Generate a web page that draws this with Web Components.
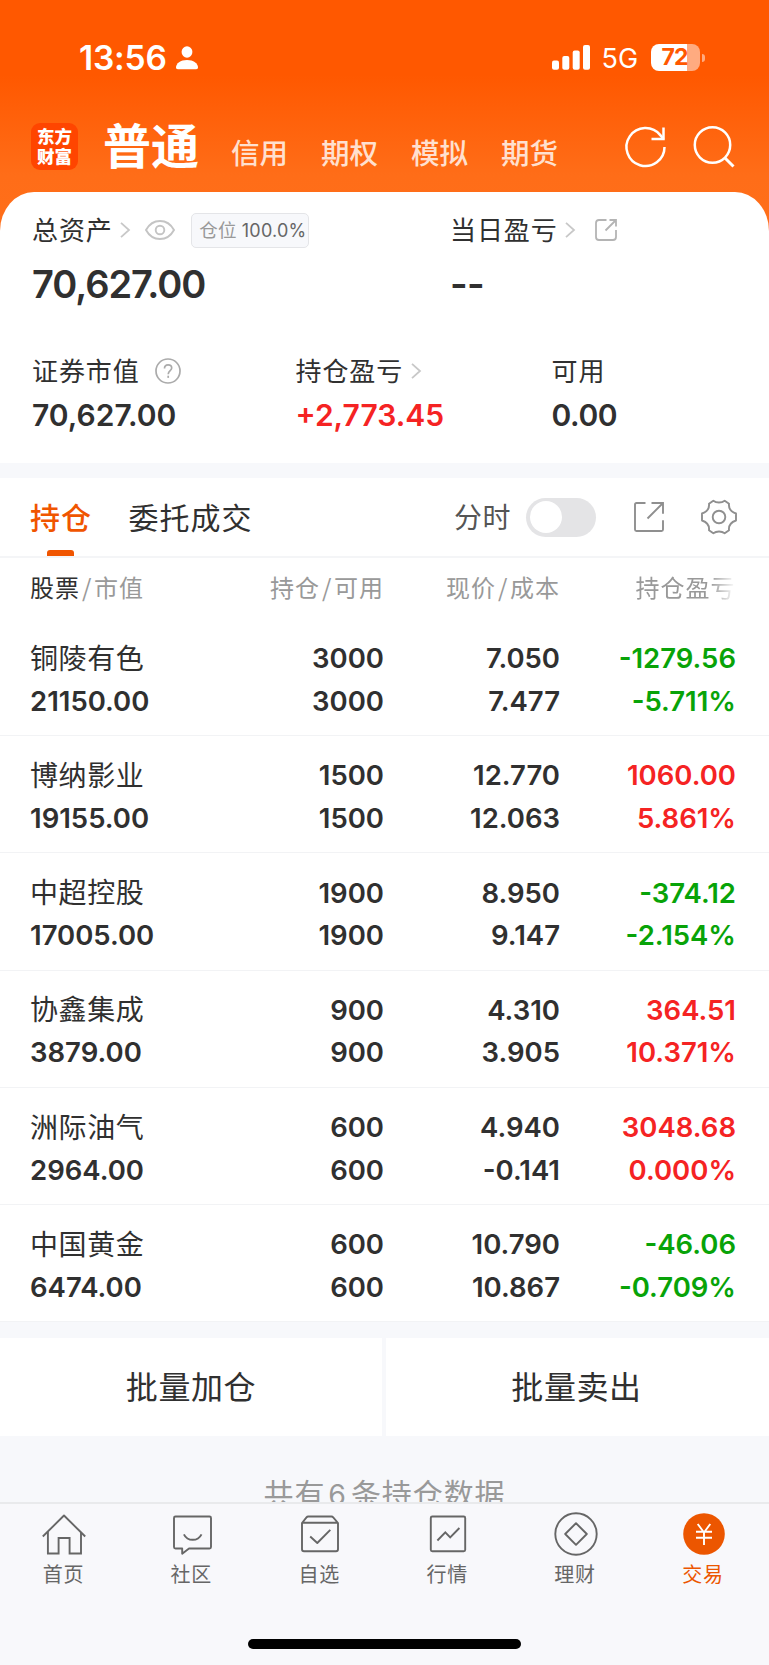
<!DOCTYPE html>
<html lang="zh-CN">
<head>
<meta charset="utf-8">
<title>交易</title>
<style>
html,body{margin:0;padding:0}
body{width:769px;height:1665px;overflow:hidden;background:#f7f8fb;color:#303030;font-family:"Noto Sans CJK SC","Liberation Sans",sans-serif}
</style>
</head>
<body>
<trade-app></trade-app>
<script>
const CJK = '"Noto Sans CJK SC","Liberation Sans",sans-serif';
const NUM = 'Inter,"Noto Sans CJK SC",sans-serif';
const define = (name, render) => customElements.define(name, class extends HTMLElement {
  connectedCallback() {
    if (this.shadowRoot) return;
    const t = document.createElement('template');
    t.innerHTML = '<style>*{box-sizing:border-box}svg{display:block;overflow:visible}</style>' + render(this);
    this.attachShadow({ mode: 'open' }).append(t.content.cloneNode(true));
  }
});

/* Line icons; each entry is [width, height, markup] */
const ICONS = {
  person: [23, 24, '<g fill="#fff"><ellipse cx="11" cy="6" rx="5.400" ry="5.800"/><path d="M0 21.500C0 17.500 4.500 14 11 14s11 3.500 11 7.500c0 1-.8 1.700-1.800 1.700H1.800C.8 23.200 0 22.500 0 21.500z"/></g>'],
  signal: [39, 25, '<g fill="#fff"><rect x="0" y="15.500" width="7" height="9.300" rx="2"/><rect x="10.300" y="11" width="7" height="13.800" rx="2"/><rect x="20.700" y="5.500" width="7" height="19.300" rx="2"/><rect x="31" y="0" width="7" height="24.800" rx="2"/></g>'],
  refresh: [42, 42, '<g fill="none" stroke="#fff" stroke-width="2.500"><path d="M39.500 21A19 19 0 1 1 35.300 9.100L38.500 13"/><path d="M38.500 1.500V13H26.500"/></g>'],
  search: [42, 42, '<g fill="none" stroke="#fff" stroke-width="2.500"><circle cx="19.500" cy="19" r="17.700"/><path d="M31.500 31.500L40.500 40.500" stroke-width="3"/></g>'],
  chevron: [10, 16, '<path d="M1 .8L9 8 1 15.200" fill="none" stroke="#c8c8c8" stroke-width="1.800"/>'],
  eye: [30, 20, '<g fill="none" stroke="#c4c4c4" stroke-width="1.900"><path d="M1 10C4 4.500 9.500 1 15 1s11 3.500 14 9c-3 5.500-8.500 9-14 9S4 15.500 1 10z"/><circle cx="15" cy="10" r="4.300"/></g>'],
  help: [26, 26, '<g fill="none" stroke="#ababab" stroke-width="1.700"><circle cx="13" cy="13" r="12"/><path d="M9.500 10.500C9.500 8 11 6.800 13.100 6.800s3.600 1.300 3.600 3.200c0 2.600-3.500 2.800-3.500 6.300"/><path d="M13.200 17.700v2.200"/></g>'],
  share: [22, 22, '<g fill="none" stroke="#b4b4b4" stroke-width="1.800"><path d="M11.500 1H4Q1 1 1 4V18Q1 21 4 21H18Q21 21 21 18V11"/><path d="M10.500 11.500L21 1M14.500 1H21V7.500"/></g>'],
  external: [30, 30, '<g fill="none" stroke="#8f8f8f" stroke-width="1.900"><path d="M11.500 1H2.500Q1 1 1 2.500V27.500Q1 29 2.500 29H27.500Q29 29 29 27.500V18.300"/><path d="M13.500 16.500L28.500 1.500M17.500 1H29V11.800"/></g>'],
  gear: [36, 36, '<g fill="none" stroke="#8f8f8f" stroke-width="1.900" stroke-linejoin="round"><path d="M12.300 1.700C14 3 16 3.500 18 3.500S22 3 23.700 1.700L28 4.700C27.500 9 29.800 12.700 35 14.500V21.500C29.800 23.300 27.500 27 28 31.300L23.700 34.300C22 33 20 32.500 18 32.500S14 33 12.300 34.300L8 31.300C8.500 27 6.200 23.300 1 21.500V14.500C6.200 12.700 8.500 9 8 4.700z"/><circle cx="18" cy="18" r="6.300"/></g>'],
  home: [44, 44, '<g fill="none" stroke="#666" stroke-width="1.900"><path d="M.8 24.500L22 3.500 43.200 24.500" stroke-linejoin="round"/><path d="M5.900 20V41.500H16.600V26H27.600V41.500H39V20"/></g>'],
  chat: [44, 44, '<g fill="none" stroke="#666" stroke-width="1.900" stroke-linejoin="round"><path d="M5.500 4.500H39.500Q41 4.500 41 6V35Q41 36.500 39.500 36.500H19L12.200 41.700V36.500H5.500Q4 36.500 4 35V6Q4 4.500 5.500 4.500z"/><path d="M13.900 22.300Q16.600 27.800 22.700 27.800T31.500 22.300"/></g>'],
  pick: [44, 44, '<g fill="none" stroke="#666" stroke-width="1.900" stroke-linejoin="round"><path d="M4 11L8.500 5.400Q9.200 4.500 10.200 4.500H33.500Q34.500 4.500 35.200 5.400L40 11V37.300Q40 39.300 38 39.300H6Q4 39.300 4 37.300zM4 10.800H40"/><path d="M12.200 24.500L19.300 31 32.300 17.800"/></g>'],
  chart: [44, 44, '<g fill="none" stroke="#666" stroke-width="1.900"><rect x="4.800" y="4.500" width="34.400" height="34.800" rx="1.500"/><path d="M11.400 28.500L19.300 20.300 24.200 25.300 33.400 16"/></g>'],
  wealth: [44, 44, '<g fill="none" stroke="#666" stroke-width="1.900" stroke-linejoin="round"><circle cx="22" cy="22" r="20.700"/><path d="M22 11.200L32.800 22 22 32.800 11.200 22z"/></g>'],
  trade: [44, 44, '<circle cx="22" cy="22" r="20.800" fill="#ec5600"/><path d="M15.700 12L22 20.500 28.300 12M14 19.700H30M14 25.800H30M22 20V33" fill="none" stroke="#fff" stroke-width="1.900"/>']
};
define('app-icon', el => {
  const [w, h, body] = ICONS[el.getAttribute('name')];
  return `<style>:host{display:block;flex:none;width:${w}px;height:${h}px}</style><svg width="${w}" height="${h}" viewBox="0 0 ${w} ${h}">${body}</svg>`;
});

define('status-bar', () => `<style>
:host{display:flex;align-items:center;height:86px;padding:29px 64.500px 0 79px;color:#fff;font-family:${NUM}}
.time{font-size:33.500px;font-weight:600;line-height:40px;width:97px;letter-spacing:-.2px}
.right{display:flex;align-items:center;margin-left:auto}
.net{font-size:27px;line-height:40px;margin-left:11px;width:37px;position:relative;top:1px}
.bat{width:49px;height:27px;border-radius:8px;background:linear-gradient(90deg,#fff 73%,#ffab80 73%);color:#ff5800;font-size:23px;font-weight:700;line-height:27px;text-align:center;margin-left:12px;letter-spacing:-1px;padding-right:1px}
.tip{width:3px;height:8px;margin-left:2px;border-radius:0 4px 4px 0;background:#ffab80}
</style><div class="time">13:56</div><app-icon name="person"></app-icon>
<div class="right"><app-icon name="signal"></app-icon><div class="net">5G</div><div class="bat">72</div><div class="tip"></div></div>`);

define('app-header', () => `<style>
:host{display:flex;align-items:flex-start;height:106px;padding:37px 34px 0 31px;color:#fff}
.logo{flex:none;width:47px;height:47px;border-radius:9px;background:#ff4500}
.logo span{display:block;height:20px;text-align:center;font:900 17.500px/20px ${CJK};position:relative;top:2.500px}
.main{font-size:48px;font-weight:700;line-height:60px;margin:-10px 0 0 25px;width:128px;white-space:nowrap}
.tab{font-size:28.500px;font-weight:500;line-height:40px;width:90px;margin-top:9px;color:#ffe0cf}
.icons{display:flex;gap:26px;margin:3px 0 0 auto}
</style><div class="logo"><span>东方</span><span>财富</span></div><div class="main">普通</div>
<div class="tab">信用</div><div class="tab">期权</div><div class="tab">模拟</div><div class="tab">期货</div>
<div class="icons"><app-icon name="refresh"></app-icon><app-icon name="search"></app-icon></div>`);

define('asset-stat', el => `<style>
:host{display:block}
.label{display:flex;align-items:center;height:36px;font-size:26px;letter-spacing:.9px;line-height:36px;white-space:nowrap}
.label b{font-weight:400;position:relative;top:-1px}
.value{font:600 ${el.hasAttribute('big') ? '38px/40px' : '30px/40px'} ${NUM};margin-top:${el.hasAttribute('big') ? 16 : 6}px;color:${el.getAttribute('color') || 'inherit'};white-space:nowrap;letter-spacing:${el.getAttribute('ls') || 0}px}
</style><div class="label"><b>${el.getAttribute('label')}</b><slot></slot></div><div class="value">${el.getAttribute('value')}</div>`);

define('asset-card', () => `<style>
:host{display:block;height:271px;background:#fff;border-radius:34px 34px 0 0/39px 39px 0 0;padding:20px 0 0 32px}
.top{display:grid;grid-template-columns:418px 1fr;height:141px}
.sub{display:grid;grid-template-columns:263.500px 256px 1fr}
.chev{margin-left:7.500px}.eye{margin-left:15px}.help{margin-left:15.500px}.share{margin-left:20px}
.badge{display:flex;align-items:center;width:118px;height:35px;margin-left:16px;padding-left:7px;border:1px solid #e4e5e8;border-radius:5px;background:#f7f8fb;font:18px/33px ${NUM};color:#666;letter-spacing:.2px}
.badge i{font:18.500px/30px ${CJK};color:#999;margin-right:5px;letter-spacing:.3px;position:relative;top:-1px}
</style>
<div class="top">
<asset-stat big ls="-1.05" label="总资产" value="70,627.00"><app-icon class="chev" name="chevron"></app-icon><app-icon class="eye" name="eye"></app-icon><span class="badge"><i>仓位</i>100.0%</span></asset-stat>
<asset-stat big ls="-.6" label="当日盈亏" value="--"><app-icon class="chev" name="chevron"></app-icon><app-icon class="share" name="share"></app-icon></asset-stat>
</div>
<div class="sub">
<asset-stat label="证券市值" value="70,627.00"><app-icon class="help" name="help"></app-icon></asset-stat>
<asset-stat label="持仓盈亏" value="+2,773.45" color="#f52323"><app-icon class="chev" name="chevron"></app-icon></asset-stat>
<asset-stat ls="-.4" label="可用" value="0.00"></asset-stat>
</div>`);

define('position-tabs', () => `<style>
:host{display:flex;align-items:center;height:80px;margin-top:15px;padding:1px 32px 1px 30px;background:#fff;border-bottom:2px solid #f4f5f7}
div{line-height:44px;position:relative;top:-1px;white-space:nowrap}
.on{font-size:30px;letter-spacing:1px;font-weight:500;color:#f05500;width:98.500px}
.on::after{content:"";position:absolute;left:17px;top:56px;width:27px;height:6px;border-radius:3px 3px 0 0;background:#f05500}
.off{font-size:30px;letter-spacing:1px}
.sw{font-size:28px;letter-spacing:.5px;color:#555;margin-left:auto}
.toggle{width:70px;height:39px;top:0;border-radius:20px;background:#e4e4e6;margin:0 38px 0 15px;padding:3.500px}
.toggle::before{content:"";display:block;width:32px;height:32px;border-radius:50%;background:#fff}
.gear{margin-left:37px}
</style><div class="on">持仓</div><div class="off">委托成交</div><div class="sw">分时</div><div class="toggle"></div><app-icon name="external"></app-icon><app-icon class="gear" name="gear"></app-icon>`);

define('position-head', () => `<style>
:host{display:grid;grid-template-columns:168px 186px 176px 176px;height:61px;padding:9px 0 0 30px;background:#fff;color:#999;font-size:24px;line-height:40px;letter-spacing:1px;text-align:right;white-space:nowrap}
.l{text-align:left}.l b{font-weight:400;color:#303030}
i{font-style:normal;margin:0 1.500px 0 2px}
.fade{margin-left:75.500px;text-align:left;overflow:hidden;-webkit-mask:linear-gradient(90deg,#000 74%,transparent)}
</style><div class="l"><b>股票</b><i>/</i>市值</div><div>持仓<i>/</i>可用</div><div>现价<i>/</i>成本</div><div class="fade">持仓盈亏</div>`);

define('position-row', el => {
  const [name, val, qty, avail, price, cost, pl, pct] = el.textContent.split('|');
  return `<style>
:host{display:grid;grid-template-columns:168px 186px 176px 176px;grid-template-rows:42px 42px;row-gap:.5px;height:117.200px;padding:18.300px 0 0 30px;background:#fff;border-bottom:1.500px solid #f2f3f5;font:600 27.500px/42px ${NUM};text-align:right;white-space:nowrap}
.l{text-align:left}
.n{font:400 28px/42px ${CJK};letter-spacing:.6px;position:relative;top:-1.500px}
.c{color:${pl[0] === '-' ? '#08a308' : '#f52323'}}
</style><div class="l n">${name}</div><div>${qty}</div><div>${price}</div><div class="c">${pl}</div>
<div class="l">${val}</div><div>${avail}</div><div>${cost}</div><div class="c">${pct}</div>`;
});

define('action-bar', () => `<style>
:host{display:grid;grid-template-columns:382px 1fr;column-gap:4px;margin-top:16px;height:98px}
div{background:#fff;text-align:center;font-size:32px;letter-spacing:.6px;line-height:95px}
div+div{padding-right:2px}
</style><div>批量加仓</div><div>批量卖出</div>`);

define('tab-item', el => `<style>
:host{display:flex;flex-direction:column;align-items:center;padding-top:8px;color:${el.hasAttribute('on') ? '#ec5600' : '#666'}}
span{font-size:20px;letter-spacing:.8px;line-height:30px;margin-top:3px;margin-right:1px}
</style><app-icon name="${el.getAttribute('icon')}"></app-icon><span><slot></slot></span>`);

define('tab-bar', () => `<style>
:host{display:block;height:163px;background:#f8f8fb;border-top:2px solid #e9eaec}
nav{display:grid;grid-template-columns:repeat(6,1fr);width:767.500px;height:135px}
.home{width:273px;height:10px;border-radius:5px;background:#000;margin:0 auto}
</style><nav>
<tab-item icon="home">首页</tab-item><tab-item icon="chat">社区</tab-item><tab-item icon="pick">自选</tab-item>
<tab-item icon="chart">行情</tab-item><tab-item icon="wealth">理财</tab-item><tab-item icon="trade" on>交易</tab-item>
</nav><div class="home"></div>`);

define('trade-app', () => `<style>
:host{display:flex;flex-direction:column;width:769px;height:1665px;overflow:hidden}
.hero{flex:none;height:463px;background:linear-gradient(#ff5800 0,#ff5800 75px,#ff6d18 175px,#ff6f1a 240px)}
.list{flex:none;height:703px}
.count{flex:1;overflow:hidden;padding-top:33px;text-align:center;color:#999;font-size:30px;line-height:46px;letter-spacing:.9px}
.count b{font:400 28.500px ${NUM};margin:0 4px 0 3px}
position-tabs,position-head,action-bar,tab-bar{flex:none}
</style>
<div class="hero"><status-bar></status-bar><app-header></app-header><asset-card></asset-card></div>
<position-tabs></position-tabs><position-head></position-head>
<div class="list">
<position-row>铜陵有色|21150.00|3000|3000|7.050|7.477|-1279.56|-5.711%</position-row>
<position-row>博纳影业|19155.00|1500|1500|12.770|12.063|1060.00|5.861%</position-row>
<position-row>中超控股|17005.00|1900|1900|8.950|9.147|-374.12|-2.154%</position-row>
<position-row>协鑫集成|3879.00|900|900|4.310|3.905|364.51|10.371%</position-row>
<position-row>洲际油气|2964.00|600|600|4.940|-0.141|3048.68|0.000%</position-row>
<position-row>中国黄金|6474.00|600|600|10.790|10.867|-46.06|-0.709%</position-row>
</div>
<action-bar></action-bar>
<div class="count">共有<b>6</b>条持仓数据</div>
<tab-bar></tab-bar>`);
</script>
</body>
</html>
